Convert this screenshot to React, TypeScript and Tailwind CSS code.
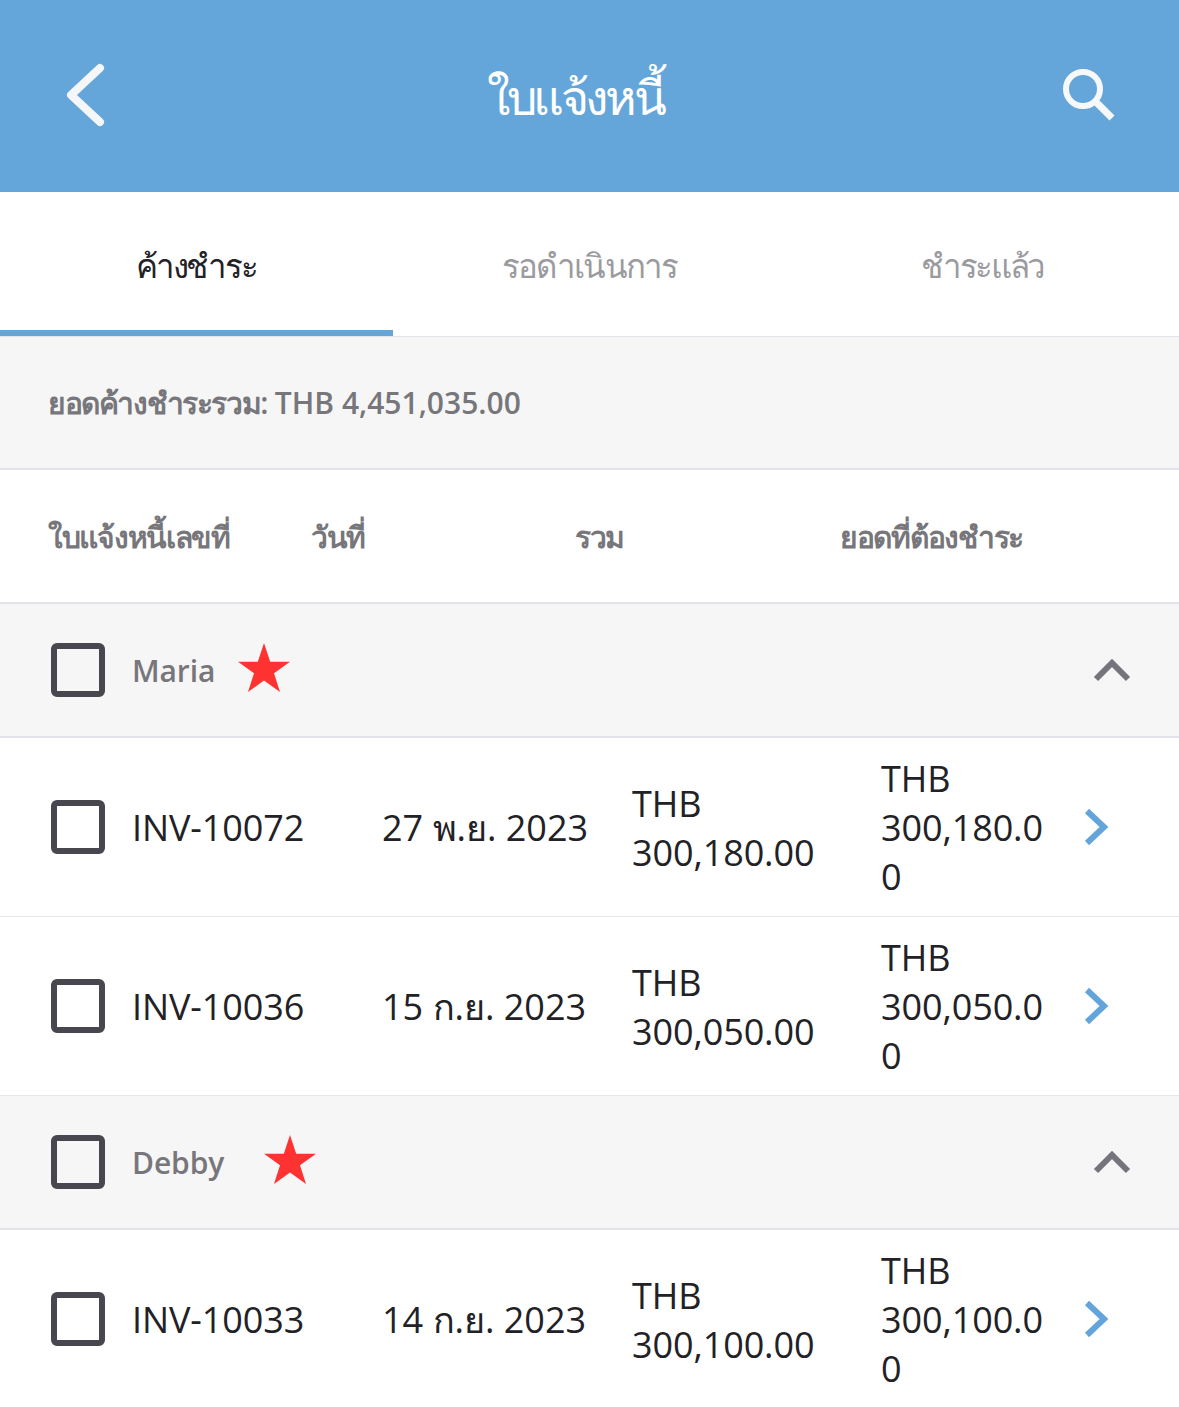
const font = "[font-family:'Open_Sans','Noto_Sans',sans-serif]";

function Check() {
  return <div className="w-[54px] h-[54px] shrink-0 rounded-[6px] border-[6px] border-[#48464f]" />;
}

function Star() {
  return (
    <svg width="52" height="50" viewBox="0 0 52 50" className="shrink-0 -translate-y-[2px]">
      <polygon points="26,0 32.2,18.7 52,18.7 36,30.3 42,49 26,37.5 10,49 16,30.3 0,18.7 19.8,18.7" fill="#ff3232" />
    </svg>
  );
}

function Up() {
  return (
    <svg width="38" height="24" viewBox="0 0 38 24" className="shrink-0">
      <path d="M3 21 L19 5 L35 21" fill="none" stroke="#75737b" strokeWidth="6" />
    </svg>
  );
}

function Next() {
  return (
    <svg width="26" height="38" viewBox="0 0 26 38" className="shrink-0">
      <path d="M4 3 L21 19 L4 35" fill="none" stroke="#63a5db" strokeWidth="6" />
    </svg>
  );
}

function Group({ name, gap }: { name: string; gap: string }) {
  return (
    <div className="h-[134px] bg-[#f6f6f7] border-b-2 border-[#e3e2e9] flex items-center pl-[51px] pr-[48px]">
      <Check />
      <div className="ml-[27px] text-[30px] text-[#77767b] font-semibold tracking-[-0.1px]">{name}</div>
      <div className={gap}><Star /></div>
      <div className="ml-auto"><Up /></div>
    </div>
  );
}

function Row({ inv, date, total, due1, due2 }: { inv: string; date: string; total: string; due1: string; due2: string }) {
  return (
    <div className="h-[179px] border-b border-[#e8e8ec] flex items-center pl-[51px] text-[36px] leading-[49px] text-[#222226] tracking-[-0.1px]">
      <Check />
      <div className="ml-[27px] w-[250px] shrink-0">{inv}</div>
      <div className="w-[250px] shrink-0 whitespace-nowrap tracking-normal">{date}</div>
      <div className="w-[249px] shrink-0 pt-[2px]">THB<br />{total}</div>
      <div className="w-[202px] shrink-0">THB<br />{due1}<br />{due2}</div>
      <Next />
    </div>
  );
}

export default function App() {
  return (
    <div className={`w-[1179px] h-[1407px] overflow-hidden bg-white ${font}`}>
      <header className="h-[192px] bg-[#65a6da] flex items-center pl-[64px] pr-[63px]">
        <svg width="42" height="66" viewBox="0 0 42 66" className="-translate-y-[1px]">
          <path d="M36 6 L7 33 L36 60" fill="none" stroke="#f4f6f8" strokeWidth="8" strokeLinecap="round" strokeLinejoin="round" />
        </svg>
        <div className="ml-[381px] text-[48px] text-white tracking-[-3.4px] translate-y-[1px]">ใบแจ้งหนี้</div>
        <svg width="54" height="54" viewBox="0 0 54 54" className="ml-auto -translate-y-[1px]">
          <circle cx="21" cy="21" r="17" fill="none" stroke="#f6f8fa" strokeWidth="6" />
          <path d="M33 33 L50 50" stroke="#f6f8fa" strokeWidth="7" />
        </svg>
      </header>

      <nav className="h-[145px] flex border-b border-[#e3e2e9] text-[33px]">
        <div className="flex-1 flex items-center justify-center border-b-[6px] border-[#65a6da] text-[#222226] pt-[10px] tracking-[-2.1px]">ค้างชำระ</div>
        <div className="flex-1 flex items-center justify-center text-[#9b9b9f] pt-[4px] tracking-[-1.8px]">รอดำเนินการ</div>
        <div className="flex-1 flex items-center justify-center text-[#9b9b9f] pt-[4px] tracking-[-2.3px]">ชำระแล้ว</div>
      </nav>

      <div className="h-[133px] bg-[#f6f6f7] border-b-2 border-[#e3e2e9] flex items-center pl-[48px] text-[30px] text-[#77767b] font-semibold">
        <div className="whitespace-pre">
          <span className="tracking-[-1.4px]">ยอดค้างชำระรวม:</span> <span>THB 4,451,035.00</span>
        </div>
      </div>

      <div className="h-[134px] border-b-2 border-[#e3e2e9] flex items-center text-[30px] text-[#77767b] font-semibold tracking-[-1.3px]">
        <div className="ml-[48px] w-[263px] shrink-0 whitespace-nowrap">ใบแจ้งหนี้เลขที่</div>
        <div className="w-[264px] shrink-0">วันที่</div>
        <div className="w-[265px] shrink-0">รวม</div>
        <div className="whitespace-nowrap">ยอดที่ต้องชำระ</div>
      </div>

      <Group name="Maria" gap="ml-[23px]" />
      <Row inv="INV-10072" date="27 พ.ย. 2023" total="300,180.00" due1="300,180.0" due2="0" />
      <Row inv="INV-10036" date="15 ก.ย. 2023" total="300,050.00" due1="300,050.0" due2="0" />
      <Group name="Debby" gap="ml-[40px]" />
      <Row inv="INV-10033" date="14 ก.ย. 2023" total="300,100.00" due1="300,100.0" due2="0" />
    </div>
  );
}
